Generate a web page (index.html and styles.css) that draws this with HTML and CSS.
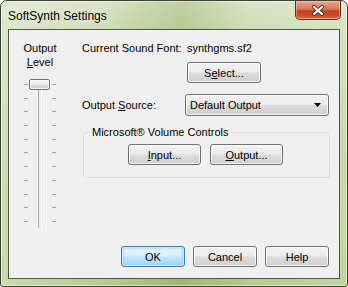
FILE: index.html
```html
<!DOCTYPE html>
<html lang="en">
<head>
  <meta charset="UTF-8">
  <title>SoftSynth Settings</title>
  <link rel="stylesheet" href="styles.css">
</head>
<body>
  <div class="window">
    <div class="titlebar">
      <span class="title">SoftSynth Settings</span>
      <div class="close">
        <svg width="14" height="11" viewBox="0 0 14 11">
          <path d="M3 2 L11 9 M11 2 L3 9" stroke="#5a2a1c" stroke-width="4" stroke-linecap="round"/>
          <path d="M3 2 L11 9 M11 2 L3 9" stroke="#ffffff" stroke-width="2.2" stroke-linecap="round"/>
        </svg>
      </div>
    </div>
    <div class="client">
      <div class="top">
        <div class="level">
          <div class="level-label">Output<br><u>L</u>evel</div>
          <div class="slider">
            <div class="ticks left">
              <i></i><i></i><i></i><i></i><i></i><i></i><i></i><i></i><i></i><i></i><i></i>
            </div>
            <div class="track-area">
              <div class="track"></div>
              <div class="thumb"></div>
            </div>
            <div class="ticks right">
              <i></i><i></i><i></i><i></i><i></i><i></i><i></i><i></i><i></i><i></i><i></i>
            </div>
          </div>
        </div>
        <div class="main">
          <div class="row">
            <span class="label">Current Sound Font:</span>
            <span class="value">synthgms.sf2</span>
          </div>
          <div class="row select-row">
            <span class="label"></span>
            <button class="btn select">S<u>e</u>lect...</button>
          </div>
          <div class="row source-row">
            <span class="label">Output <u>S</u>ource:</span>
            <div class="dropdown">
              <span>Default Output</span>
              <svg width="8" height="4" viewBox="0 0 8 4"><path d="M0 0 H7 L3.5 4 Z" fill="#000"/></svg>
            </div>
          </div>
          <fieldset class="group">
            <legend>Microsoft® Volume Controls</legend>
            <div class="group-buttons">
              <button class="btn"><u>I</u>nput...</button>
              <button class="btn"><u>O</u>utput...</button>
            </div>
          </fieldset>
        </div>
      </div>
      <div class="buttons">
        <button class="btn dialog default">OK</button>
        <button class="btn dialog">Cancel</button>
        <button class="btn dialog">Help</button>
      </div>
    </div>
  </div>
</body>
</html>
```

FILE: styles.css
```css
* {
  margin: 0;
  padding: 0;
  box-sizing: border-box;
}
body {
  width: 348px;
  height: 287px;
  overflow: hidden;
  background: #ffffff;
  font-family: "Liberation Sans", Arial, sans-serif;
  font-size: 11px;
  color: #000;
}
.window {
  width: 348px;
  height: 287px;
  border: 1px solid #3a4034;
  border-radius: 7px 7px 3px 3px;
  background:
    linear-gradient(90deg, rgba(255,255,255,0.4) 0%, rgba(255,255,255,0.15) 30%, rgba(110,150,60,0.2) 52%, rgba(255,255,255,0.15) 72%, rgba(255,255,255,0.3) 100%),
    linear-gradient(180deg, #d3dfbd 0%, #c2d4a0 15%, #b0c789 60%, #a9c27d 100%);
  display: flex;
  flex-direction: column;
  padding: 0 7px 7px;
  box-shadow: inset 0 0 0 1px rgba(255,255,255,0.5);
}
.titlebar {
  height: 28px;
  display: flex;
  justify-content: space-between;
  align-items: flex-start;
}
.title {
  font-size: 12px;
  margin-top: 8px;
  color: #000;
  text-shadow: 0 0 6px rgba(255,255,255,0.9);
}
.close {
  width: 46px;
  height: 19px;
  margin-right: -1px;
  border: 1px solid #5e2a1c;
  border-top: none;
  border-radius: 0 0 5px 5px;
  background: linear-gradient(180deg, #e8a48e 0%, #d9785b 45%, #c4401f 55%, #c9512f 85%, #e07a52 100%);
  box-shadow: inset 0 0 0 1px rgba(255,220,200,0.45);
  display: flex;
  justify-content: center;
  align-items: center;
}
.client {
  flex: 1;
  background: #f0f0f0;
  border: 1px solid #4e5a46;
  display: flex;
  flex-direction: column;
}
.top {
  display: flex;
}
.level {
  width: 64px;
  display: flex;
  flex-direction: column;
  align-items: flex-start;
}
.level-label {
  width: 62px;
  text-align: center;
  line-height: 14px;
  margin-top: 11px;
}
.slider {
  display: flex;
  margin-top: 10px;
  margin-left: 15px;
  height: 149px;
}
.ticks {
  display: flex;
  flex-direction: column;
  justify-content: space-between;
  padding: 5px 0 6px;
  width: 4px;
}
.ticks i {
  display: block;
  height: 1px;
  background: #a8a8a8;
}
.ticks.left {
  margin-right: 1px;
}
.ticks.right {
  margin-left: 2px;
}
.track-area {
  position: relative;
  width: 21px;
  display: flex;
  justify-content: center;
}
.track {
  width: 4px;
  margin-top: 4px;
  background: #e7eaea;
  border-left: 1px solid #b0b0b0;
  border-right: 1px solid #ffffff;
}
.thumb {
  position: absolute;
  top: 0;
  left: 0;
  width: 21px;
  height: 11px;
  border: 1px solid #707070;
  border-radius: 2px;
  background: linear-gradient(180deg, #f5f5f5 0%, #ececec 50%, #dadada 51%, #d0d0d0 100%);
  box-shadow: inset 0 0 0 1px rgba(255,255,255,0.7);
}
.main {
  margin-left: 9px;
  width: 247px;
}
.row {
  display: flex;
  align-items: center;
}
.row:first-child {
  margin-top: 11px;
  line-height: 14px;
}
.label {
  width: 105px;
  flex-shrink: 0;
}
.btn {
  font-family: "Liberation Sans", Arial, sans-serif;
  font-size: 11px;
  color: #000;
  height: 21px;
  border: 1px solid #707070;
  border-radius: 3px;
  background: linear-gradient(180deg, #f2f2f2 0%, #ebebeb 48%, #dddddd 52%, #cfcfcf 100%);
  box-shadow: inset 0 0 0 1px rgba(255,255,255,0.75);
}
.select-row {
  margin-top: 7px;
}
.select {
  width: 74px;
}
.source-row {
  margin-top: 11px;
}
.source-row .label {
  width: 103px;
}
.dropdown {
  width: 144px;
  height: 22px;
  border: 1px solid #707070;
  border-radius: 3px;
  background: linear-gradient(180deg, #f2f2f2 0%, #ebebeb 48%, #dddddd 52%, #cfcfcf 100%);
  box-shadow: inset 0 0 0 1px rgba(255,255,255,0.75);
  display: flex;
  align-items: center;
  justify-content: space-between;
  padding: 0 6px 0 4px;
}
.group {
  margin-top: 10px;
  margin-left: 1px;
  width: 247px;
  height: 52px;
  border: 1px solid #d5dfe5;
  border-radius: 3px;
}
.group legend {
  margin-left: 6px;
  padding: 0 2px;
  line-height: 12px;
}
.group-buttons {
  display: flex;
  gap: 9px;
  padding: 6px 0 0 44px;
}
.group .btn {
  width: 73px;
  height: 21px;
}
.buttons {
  margin-top: auto;
  margin-bottom: 11px;
  padding-right: 10px;
  display: flex;
  justify-content: flex-end;
  gap: 8px;
}
.dialog {
  width: 64px;
  height: 21px;
}
.default {
  border-color: #3c7fb1;
  background: linear-gradient(180deg, #e8f5fc 0%, #d9f0fc 48%, #bee6fd 52%, #a7d9f5 100%);
  box-shadow: inset 0 0 0 1px #c6e9fb, inset 0 0 2px 2px rgba(140,200,240,0.5);
}
```
